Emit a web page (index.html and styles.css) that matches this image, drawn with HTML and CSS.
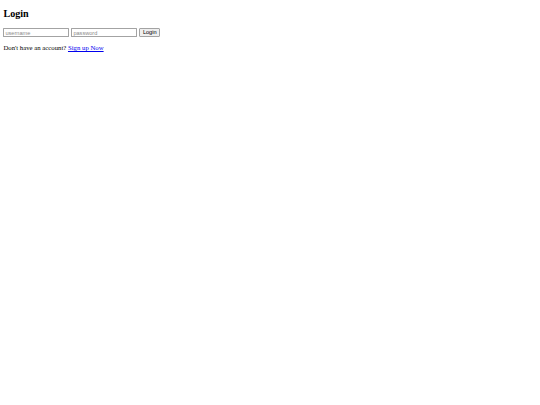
FILE: index.html
```html
<!DOCTYPE html>
<html lang="en">
<head>
<meta charset="utf-8">
<title>Login</title>
<link rel="stylesheet" href="styles.css">
</head>
<body class="page">
  <h2 class="title">Login</h2>
  <form class="login-form">
    <input class="field" type="text" placeholder="username">
    <input class="field" type="password" placeholder="password">
    <button class="btn" type="button">Login</button>
  </form>
  <p class="signup">Don't have an account? <a class="signup-link" href="#">Sign up Now</a></p>
</body>
</html>
```

FILE: styles.css
```css
html {
  background: #ffffff;
}

.page {
  margin: 0 3.4px;
  padding-top: 7.8px;
  font-family: "Liberation Serif", "Times New Roman", serif;
  font-size: 6.75px;
  color: #000000;
}

.title {
  font-size: 10.125px;
  font-weight: bold;
  margin: 0 0 9.2px;
}

.login-form {
  display: flex;
  align-items: center;
  gap: 2px;
  margin: 0;
}

.field {
  box-sizing: border-box;
  width: 66px;
  height: 9.4px;
  margin: 0;
  padding: 0 1px;
  border: 0.6px solid #a3a3a3;
  border-radius: 0.6px;
  font-family: "Liberation Sans", Arial, sans-serif;
  font-size: 5.6px;
  color: #000000;
  background: #ffffff;
  outline: none;
}

.field::placeholder {
  color: #8a8a8a;
}

.btn {
  box-sizing: border-box;
  height: 8.6px;
  margin: 0;
  padding: 0 2.5px;
  border: 0.6px solid #a3a3a3;
  border-radius: 1px;
  background: #efefef;
  font-family: "Liberation Sans", Arial, sans-serif;
  font-size: 5.6px;
  line-height: 1;
  color: #000000;
}

.signup {
  margin: 6.6px 0;
}

.signup-link {
  color: #0000ee;
  text-decoration: underline;
}
```
